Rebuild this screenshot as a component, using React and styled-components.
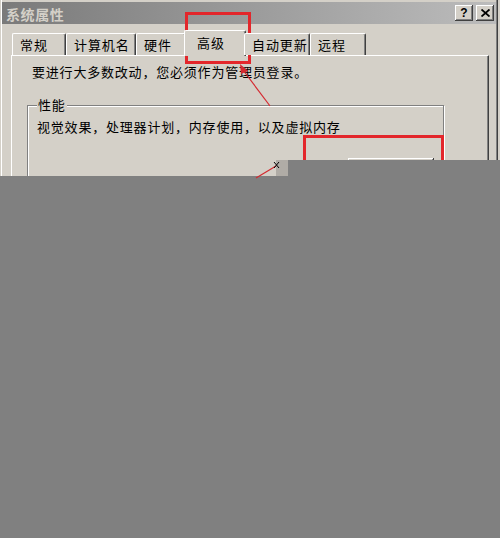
import React from "react";
import styled, { createGlobalStyle } from "styled-components";

const GlobalStyle = createGlobalStyle`
  html, body {
    margin: 0;
    padding: 0;
    background: #808080;
  }
  body {
    font-family: "Noto Sans CJK SC", "Noto Sans", sans-serif;
    color: #000;
  }
`;

const tabs = [
  { label: "常规", width: 54 },
  { label: "计算机名", width: 70 },
  { label: "硬件", width: 50 },
  { label: "高级", width: 62, active: true },
  { label: "自动更新", width: 66 },
  { label: "远程", width: 56 },
];

const Page = styled.div`
  position: relative;
  width: 500px;
  height: 538px;
  overflow: hidden;
  background: #808080;
`;

const Window = styled.div`
  width: 500px;
  height: 176px;
  overflow: hidden;
  box-sizing: border-box;
  padding: 2px 4px 0 2px;
  display: flex;
  flex-direction: column;
  background: #d4d0c8;
  box-shadow: inset -2px 0 0 #d4d0c8, inset -3px 0 0 #404040,
    inset -4px 0 0 #808080, inset 1px 0 0 #d4d0c8, inset 2px 0 0 #fff;
`;

const TitleBar = styled.div`
  height: 22px;
  flex: none;
  display: flex;
  align-items: center;
  padding: 0 2px 0 4px;
  background: linear-gradient(to right, #7a7a7a, #bcbcbc);
`;

const Title = styled.div`
  flex: 1;
  font-size: 14px;
  font-weight: bold;
  letter-spacing: 0.6px;
  line-height: 16px;
  color: #d4d0c8;
  padding-top: 1px;
`;

const CaptionButton = styled.div`
  width: 18px;
  height: 16px;
  margin-left: ${(p) => (p.$gap ? "3px" : "0")};
  box-sizing: border-box;
  display: flex;
  align-items: center;
  justify-content: center;
  background: #d4d0c8;
  box-shadow: inset -1px -1px 0 #404040, inset 1px 1px 0 #fff,
    inset -2px -2px 0 #808080;
  font-family: "Liberation Sans", Arial, sans-serif;
  font-size: 12px;
  font-weight: bold;
  line-height: 12px;
`;

const Body = styled.div`
  padding: 6px 0 0 9px;
  display: flex;
  flex-direction: column;
  flex: 1;
`;

const TabStrip = styled.div`
  display: flex;
  align-items: flex-end;
  height: 25px;
  padding-left: 1px;
  position: relative;
  z-index: 1;
`;

const Tab = styled.div`
  width: ${(p) => p.$w}px;
  height: ${(p) => (p.$active ? 26 : 22)}px;
  margin: 0 ${(p) => (p.$active ? -2 : 0)}px ${(p) => (p.$active ? -1 : 0)}px;
  box-sizing: border-box;
  padding-left: ${(p) => (p.$active ? 12 : 7)}px;
  padding-bottom: ${(p) => (p.$active ? 2 : 0)}px;
  display: flex;
  align-items: center;
  background: #d4d0c8;
  border-top: 1px solid #fff;
  border-left: 1px solid #fff;
  border-right: 1px solid #404040;
  border-top-left-radius: 2px;
  border-top-right-radius: 2px;
  box-shadow: inset -1px 0 0 #808080;
  font-size: 13px;
  letter-spacing: 0.9px;
  line-height: 16px;
  white-space: nowrap;
`;

const Panel = styled.div`
  width: 478px;
  flex: 1;
  box-sizing: border-box;
  border-top: 1px solid #fff;
  border-left: 1px solid #fff;
  border-right: 1px solid #404040;
  box-shadow: inset -1px 0 0 #808080;
  padding: 8px 0 0 15px;
`;

const Notice = styled.div`
  margin-left: 5px;
  font-size: 13px;
  letter-spacing: 0.8px;
  line-height: 16px;
`;

const Group = styled.fieldset`
  width: 417px;
  box-sizing: border-box;
  margin: 17px 0 0 0;
  padding: 6px 9px 10px 9px;
  border: 1px solid #808080;
  box-shadow: 1px 1px 0 #fff, inset 1px 1px 0 #fff;
  min-width: 0;
`;

const Legend = styled.legend`
  padding: 0 1px;
  background: #d4d0c8;
  font-size: 13px;
  letter-spacing: 0.8px;
  line-height: 16px;
`;

const GroupText = styled.div`
  font-size: 13px;
  letter-spacing: 0.8px;
  line-height: 16px;
`;

const ButtonRow = styled.div`
  display: flex;
  justify-content: flex-end;
  margin-top: 23px;
`;

const Button = styled.div`
  width: 86px;
  height: 23px;
  box-sizing: border-box;
  background: #d4d0c8;
  box-shadow: inset -1px -1px 0 #404040, inset 1px 1px 0 #fff,
    inset -2px -2px 0 #808080;
`;

const RedBox = styled.div`
  position: absolute;
  left: ${(p) => p.$x}px;
  top: ${(p) => p.$y}px;
  width: ${(p) => p.$w}px;
  height: ${(p) => p.$h}px;
  box-sizing: border-box;
  border: 3px solid #e3262b;
  pointer-events: none;
`;

const Shade = styled.div`
  position: absolute;
  left: 288px;
  top: 160px;
  right: 0;
  height: 16px;
  background: #808080;
`;

const Marks = styled.svg`
  position: absolute;
  left: 0;
  top: 0;
  pointer-events: none;
`;

export default function App() {
  return (
    <Page>
      <GlobalStyle />
      <Window>
        <TitleBar>
          <Title>系统属性</Title>
          <CaptionButton>?</CaptionButton>
          <CaptionButton $gap>
            <svg width="9" height="8" viewBox="0 0 9 8">
              <path d="M0.5 0.5 L8.5 7.5 M8.5 0.5 L0.5 7.5" stroke="#000" strokeWidth="1.8" />
            </svg>
          </CaptionButton>
        </TitleBar>
        <Body>
          <TabStrip>
            {tabs.map((t) => (
              <Tab key={t.label} $w={t.width} $active={t.active}>
                {t.label}
              </Tab>
            ))}
          </TabStrip>
          <Panel>
            <Notice>要进行大多数改动，您必须作为管理员登录。</Notice>
            <Group>
              <Legend>性能</Legend>
              <GroupText>视觉效果，处理器计划，内存使用，以及虚拟内存</GroupText>
              <ButtonRow>
                <Button />
              </ButtonRow>
            </Group>
          </Panel>
        </Body>
      </Window>
      <RedBox $x={185} $y={12} $w={66} $h={52} />
      <RedBox $x={303} $y={135} $w={141} $h={41} />
      <Marks width="500" height="180" viewBox="0 0 500 180">
        <line x1="270" y1="106" x2="243" y2="70" stroke="#d42a30" strokeWidth="1.2" />
        <path d="M240 64 L248 71 L241 74 Z" fill="#d42a30" />
        <line x1="256" y1="178" x2="276" y2="166" stroke="#d42a30" strokeWidth="1.2" />
        <rect x="276" y="160" width="12" height="16" fill="#b0aca6" />
        <path d="M274 162 L279 168 M279 162 L274 168" stroke="#000" strokeWidth="1" />
      </Marks>
      <Shade />
    </Page>
  );
}
